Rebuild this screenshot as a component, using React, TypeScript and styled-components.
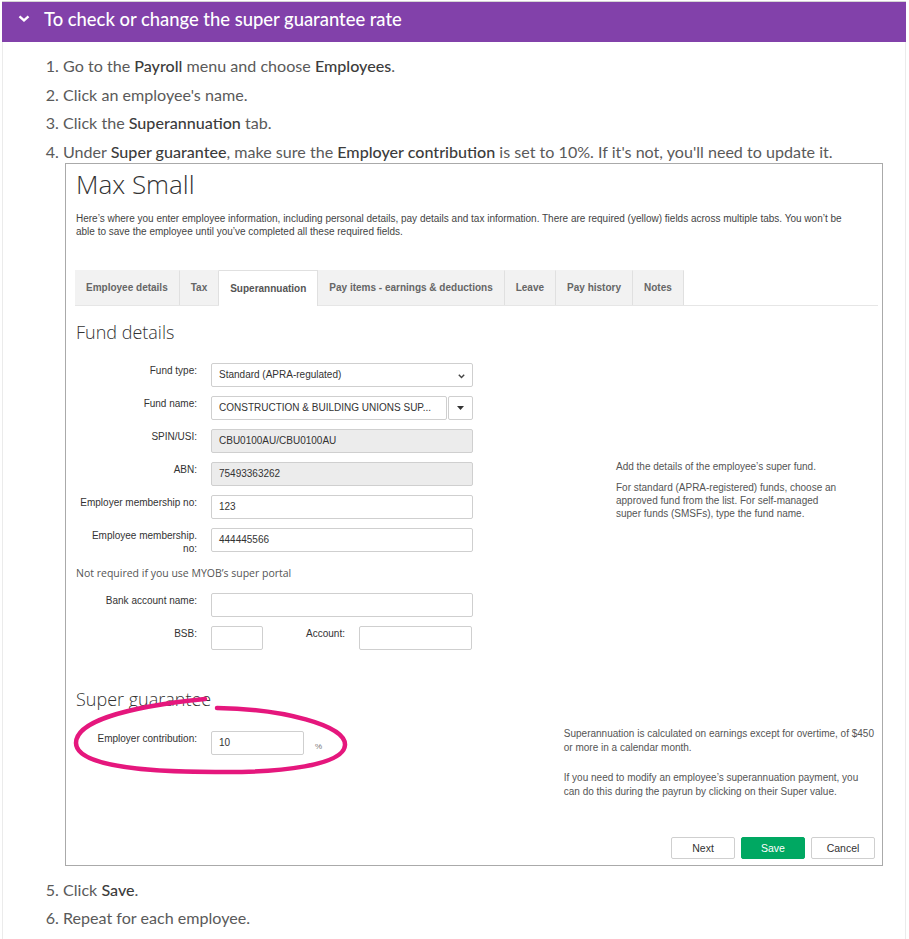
import React from "react";
import styled, { createGlobalStyle } from "styled-components";

const GlobalStyle = createGlobalStyle`
  body {
    margin: 0;
    background: #fff;
  }
`;

const Page = styled.div`
  padding: 1px 3px 0 2px;
  font-family: Lato, "Noto Sans", sans-serif;
`;

const Panel = styled.section`
  border-top: 1px solid #d4d4d4;
`;

const PanelHeader = styled.div`
  display: flex;
  align-items: center;
  gap: 14px;
  box-sizing: border-box;
  height: 40px;
  padding: 0 0 7px 16px;
  background: #8241aa;
  color: #fff;
  font-size: 18.4px;
  font-weight: 500;
`;

const PanelBody = styled.div`
  border-left: 1px solid #ebebeb;
  border-right: 1px solid #ebebeb;
  padding: 14px 0 20px 60px;
`;

const Steps = styled.ol`
  margin: 0;
  padding: 0;
  color: #5a5a5a;
  font-size: 16.1px;
  line-height: 20px;
`;

const Step = styled.li`
  margin-bottom: 8.5px;
`;

const Em = styled.strong`
  font-weight: 500;
  color: #3c3c3c;
`;

// screenshot of the employee form
const ScreenFrame = styled.div`
  position: relative;
  box-sizing: border-box;
  width: 818px;
  margin: 1.5px 0 13.5px 2px;
  padding: 4px 7px 6px 10px;
  border: 1px solid #aaa;
  font-family: "Liberation Sans", Arial, sans-serif;
  color: #333;
`;

const Title = styled.h1`
  margin: 0;
  font-family: "Open Sans", sans-serif;
  font-weight: 300;
  font-size: 26px;
  line-height: 32px;
  color: #333;
`;

const Intro = styled.p`
  margin: 12px 0 0;
  max-width: 780px;
  font-size: 10px;
  line-height: 13px;
  color: #444;
`;

const TabBar = styled.div`
  display: flex;
  height: 35px;
  margin: 32px -3px 0 -1px;
  border-bottom: 1px solid #e6e6e6;
`;

const Tab = styled.div<{ $active?: boolean }>`
  display: flex;
  align-items: center;
  padding: 0 11px;
  background: ${(p) => (p.$active ? "#fff" : "#f2f2f2")};
  border-right: 1px solid #e0e0e0;
  border-top: 1px solid ${(p) => (p.$active ? "#e0e0e0" : "transparent")};
  margin-bottom: ${(p) => (p.$active ? "-1px" : "0")};
  font-size: 10px;
  font-weight: bold;
  color: ${(p) => (p.$active ? "#555" : "#666")};
  white-space: nowrap;
`;

const SectionTitle = styled.h2<{ $gap: number }>`
  margin: ${(p) => p.$gap}px 0 0;
  font-family: "Open Sans", sans-serif;
  font-weight: 300;
  font-size: 18px;
  line-height: 24px;
  color: #333;
`;

const FundSection = styled.div`
  display: flex;
  align-items: flex-start;
  margin-top: 19px;
`;

const FormCol = styled.div`
  display: flex;
  flex-direction: column;
  gap: 9px;
  width: 397px;
`;

const FormRow = styled.div<{ $cols?: string }>`
  display: grid;
  grid-template-columns: ${(p) => p.$cols || "121px 262px"};
  column-gap: 14px;
  align-items: start;
`;

const Label = styled.div`
  padding-top: 1px;
  text-align: right;
  font-size: 10px;
  line-height: 13px;
  color: #333;
`;

const Field = styled.div<{ $disabled?: boolean }>`
  position: relative;
  display: flex;
  align-items: center;
  box-sizing: border-box;
  height: 24px;
  padding: 0 7px;
  border: 1px solid #cfcfcf;
  border-radius: 2px;
  background: ${(p) => (p.$disabled ? "#ececec" : "#fff")};
  font-size: 10px;
  color: #333;
  white-space: nowrap;
  overflow: hidden;
`;

const SelectArrow = styled.svg`
  position: absolute;
  right: 7px;
  top: 10px;
`;

const Combo = styled.div`
  display: grid;
  grid-template-columns: 1fr 25px;
  column-gap: 1px;
`;

const ComboButton = styled.div`
  display: flex;
  align-items: center;
  justify-content: center;
  box-sizing: border-box;
  height: 24px;
  border: 1px solid #cfcfcf;
  border-radius: 2px;
  background: #fff;
`;

const Note = styled.div`
  margin: 2px 0 3px;
  font-family: "Open Sans", sans-serif;
  font-size: 10.5px;
  line-height: 15px;
  color: #555;
`;

const Help = styled.div<{ $width: number; $lh: number; $gap: number }>`
  width: ${(p) => p.$width}px;
  font-size: 10px;
  line-height: ${(p) => p.$lh}px;
  color: #555;

  p {
    margin: 0 0 ${(p) => p.$gap}px;
  }
  p:last-child {
    margin-bottom: 0;
  }
`;

const FundHelp = styled(Help)`
  margin: 97px 0 0 143px;
`;

const SuperSection = styled.div`
  display: flex;
  align-items: flex-start;
  margin-top: 20px;
`;

const SuperLeft = styled.div`
  width: 489px;
`;

const SuperHelp = styled(Help)`
  margin-top: -4px;
`;

const Unit = styled.span`
  margin-left: -3px;
  padding-top: 6px;
  font-size: 8px;
  color: #777;
`;

const ButtonRow = styled.div`
  display: flex;
  justify-content: flex-end;
  gap: 6px;
  margin-top: 38px;
`;

const Button = styled.div<{ $primary?: boolean }>`
  display: flex;
  align-items: center;
  justify-content: center;
  box-sizing: border-box;
  width: 64px;
  height: 22px;
  border: 1px solid ${(p) => (p.$primary ? "#00a862" : "#cfcfcf")};
  border-radius: 2px;
  background: ${(p) => (p.$primary ? "#00a862" : "#fff")};
  color: ${(p) => (p.$primary ? "#fff" : "#333")};
  font-size: 10.5px;
`;

const Annotation = styled.svg`
  position: absolute;
  left: 0;
  top: 0;
  width: 100%;
  height: 100%;
  overflow: visible;
  pointer-events: none;
`;

const tabs = [
  "Employee details",
  "Tax",
  "Superannuation",
  "Pay items - earnings & deductions",
  "Leave",
  "Pay history",
  "Notes",
];

const EmployeeForm = () => (
  <ScreenFrame>
    <Title>Max Small</Title>
    <Intro>
      Here’s where you enter employee information, including personal details,
      pay details and tax information. There are required (yellow) fields across
      multiple tabs. You won’t be able to save the employee until you’ve
      completed all these required fields.
    </Intro>

    <TabBar>
      {tabs.map((t) => (
        <Tab key={t} $active={t === "Superannuation"}>
          {t}
        </Tab>
      ))}
    </TabBar>

    <SectionTitle $gap={14}>Fund details</SectionTitle>
    <FundSection>
      <FormCol>
        <FormRow>
          <Label>Fund type:</Label>
          <Field>
            Standard (APRA-regulated)
            <SelectArrow width="7" height="5" viewBox="0 0 7 5">
              <polyline points="0.8,0.8 3.5,3.6 6.2,0.8" fill="none" stroke="#444" strokeWidth="1.4" />
            </SelectArrow>
          </Field>
        </FormRow>
        <FormRow>
          <Label>Fund name:</Label>
          <Combo>
            <Field>CONSTRUCTION &amp; BUILDING UNIONS SUP...</Field>
            <ComboButton>
              <svg width="7" height="4" viewBox="0 0 7 4">
                <polygon points="0,0 7,0 3.5,4" fill="#333" />
              </svg>
            </ComboButton>
          </Combo>
        </FormRow>
        <FormRow>
          <Label>SPIN/USI:</Label>
          <Field $disabled>CBU0100AU/CBU0100AU</Field>
        </FormRow>
        <FormRow>
          <Label>ABN:</Label>
          <Field $disabled>75493363262</Field>
        </FormRow>
        <FormRow>
          <Label>Employer membership no:</Label>
          <Field>123</Field>
        </FormRow>
        <FormRow>
          <Label>Employee membership. no:</Label>
          <Field>444445566</Field>
        </FormRow>
        <Note>Not required if you use MYOB’s super portal</Note>
        <FormRow>
          <Label>Bank account name:</Label>
          <Field />
        </FormRow>
        <FormRow $cols="121px 52px 68px 113px">
          <Label>BSB:</Label>
          <Field />
          <Label>Account:</Label>
          <Field />
        </FormRow>
      </FormCol>
      <FundHelp $width={225} $lh={13} $gap={8}>
        <p>Add the details of the employee’s super fund.</p>
        <p>
          For standard (APRA-registered) funds, choose an approved fund from the
          list. For self-managed super funds (SMSFs), type the fund name.
        </p>
      </FundHelp>
    </FundSection>

    <SectionTitle $gap={37}>Super guarantee</SectionTitle>
    <SuperSection>
      <SuperLeft>
        <FormRow $cols="121px 93px auto">
          <Label>Employer contribution:</Label>
          <Field>10</Field>
          <Unit>%</Unit>
        </FormRow>
      </SuperLeft>
      <SuperHelp $width={312} $lh={14} $gap={16}>
        <p>
          Superannuation is calculated on earnings except for overtime, of $450
          or more in a calendar month.
        </p>
        <p>
          If you need to modify an employee’s superannuation payment, you can do
          this during the payrun by clicking on their Super value.
        </p>
      </SuperHelp>
    </SuperSection>

    <ButtonRow>
      <Button>Next</Button>
      <Button $primary>Save</Button>
      <Button>Cancel</Button>
    </ButtonRow>

    <Annotation>
      <g transform="translate(-66 -164)">
        <path
          d="M 217 708 C 282 709, 346 725, 345 745 C 344 765, 282 773, 215 772 C 140 772, 76 765, 76 743 C 76 722, 125 707, 205 699"
          fill="none"
          stroke="#e5177d"
          strokeWidth="4.5"
          strokeLinecap="round"
        />
      </g>
    </Annotation>
  </ScreenFrame>
);

const App = () => (
  <Page>
    <GlobalStyle />
    <Panel>
      <PanelHeader>
        <svg width="12" height="7" viewBox="0 0 12 7">
          <polyline points="1.5,1.3 6,5.3 10.5,1.3" fill="none" stroke="#fff" strokeWidth="2.4" />
        </svg>
        <span>To check or change the super guarantee rate</span>
      </PanelHeader>
      <PanelBody>
        <Steps>
          <Step>
            Go to the <Em>Payroll</Em> menu and choose <Em>Employees</Em>.
          </Step>
          <Step>Click an employee's name.</Step>
          <Step>
            Click the <Em>Superannuation</Em> tab.
          </Step>
          <Step>
            Under <Em>Super guarantee</Em>, make sure the <Em>Employer contribution</Em> is
            set to 10%. If it's not, you'll need to update it.
            <EmployeeForm />
          </Step>
          <Step>
            Click <Em>Save</Em>.
          </Step>
          <Step>Repeat for each employee.</Step>
        </Steps>
      </PanelBody>
    </Panel>
  </Page>
);

export default App;
